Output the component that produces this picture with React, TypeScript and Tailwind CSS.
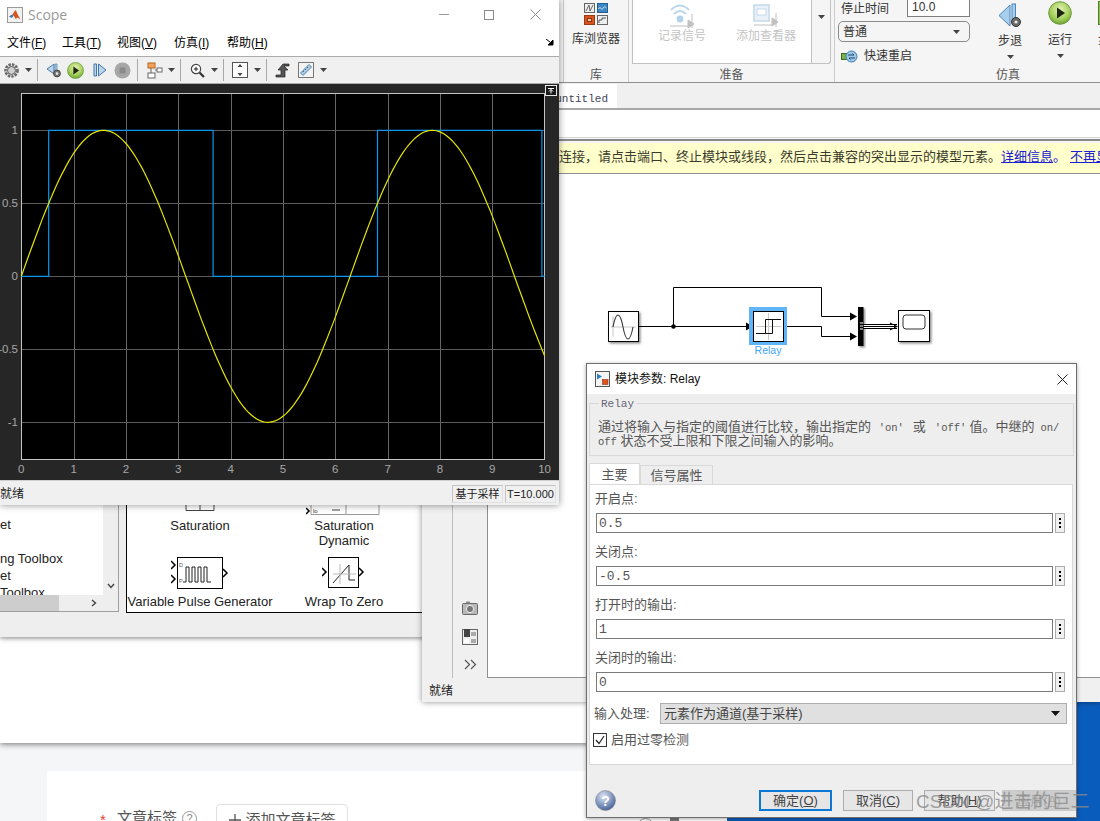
import type { ReactNode } from 'react';

const sansCls = "[font-family:'Liberation_Sans','Noto_Sans_CJK_SC',sans-serif]";
const monoCls = "[font-family:'Liberation_Mono','Noto_Sans_CJK_SC',monospace]";

// plot scale taken from the axes in the scope window
const plotX = (t: number) => 21.3 + t * 52.33;
const plotY = (v: number) => 192.3 - v * 146;

const sinePath = Array.from({ length: 201 }, (_, i) => {
    const t = i / 20;
    return `${i === 0 ? 'M' : 'L'}${plotX(t).toFixed(1)} ${plotY(Math.sin(t)).toFixed(1)}`;
}).join(' ');

const relayPath = [
    [0, 0], [0.5236, 0], [0.5236, 1], [3.665, 1], [3.665, 0], [6.807, 0], [6.807, 1], [9.948, 1], [9.948, 0], [10, 0],
].map(([t, v], i) => `${i === 0 ? 'M' : 'L'}${plotX(t).toFixed(1)} ${plotY(v).toFixed(1)}`).join(' ');

function Caret({ className = '' }: { className?: string }) {
    return (
        <svg width="7" height="4" viewBox="0 0 7 4" className={`shrink-0 ${className}`}>
            <path d="M0 0h7L3.5 4z" fill="#444" />
        </svg>
    );
}

function ToolSep({ className = '' }: { className?: string }) {
    return <div className={`w-px h-[22px] bg-[#a8a8a8] ${className}`} />;
}

function GreenPlay({ size, className = '' }: { size: number; className?: string }) {
    return (
        <svg width={size} height={size} viewBox="0 0 24 24" className={className}>
            <defs>
                <radialGradient id={`play${size}`} cx="50%" cy="35%" r="70%">
                    <stop offset="0%" stopColor="#e4f3b8" />
                    <stop offset="60%" stopColor="#a5d05c" />
                    <stop offset="100%" stopColor="#5f9a2a" />
                </radialGradient>
            </defs>
            <circle cx="12" cy="12" r="11.3" fill={`url(#play${size})`} stroke="#6c9a3c" />
            <path d="M9 6.5 17 12l-8 5.5z" fill="#1d2410" />
        </svg>
    );
}

function MatlabLogo() {
    return (
        <svg width="16" height="16" viewBox="0 0 16 16">
            <rect x="0.5" y="0.5" width="15" height="15" fill="#f2f2f2" stroke="#9a9a9a" />
            <path d="M2 9.5 5.5 7.5 8 3.5c.8-1 1.5 1 2.2 3l3.3 6-3-2-1.8 1.5-2-3.5z" fill="#d9531e" />
            <path d="M2 9.5 5.5 7.5 6.7 9 4.5 11z" fill="#3f7fb5" />
        </svg>
    );
}

function ScopeToolbar() {
    return (
        <div className="h-[26px] bg-[#f0f0f0] border-y border-[#ababab] box-content flex items-center pl-[4px]">
            <svg width="15" height="15" viewBox="0 0 15 15">
                <circle cx="7.5" cy="7.5" r="6" fill="none" stroke="#666" strokeWidth="2.6" strokeDasharray="2.4 1.1" />
                <circle cx="7.5" cy="7.5" r="4" fill="#d0d0d0" stroke="#555" />
            </svg>
            <Caret className="ml-[6px]" />
            <ToolSep className="ml-[5px]" />
            <svg width="16" height="16" viewBox="0 0 16 16" className="ml-[8px]">
                <path d="M8 2 1 7l7 5z" fill="#bcd4ea" stroke="#4a7ba8" />
                <path d="M9 2h2v7H9z" fill="#bcd4ea" stroke="#4a7ba8" strokeWidth=".7" />
                <circle cx="11" cy="11.5" r="3.4" fill="#777" stroke="#444" />
                <circle cx="11" cy="11.5" r="1.2" fill="#eee" />
            </svg>
            <GreenPlay size={17} className="ml-[5px]" />
            <svg width="14" height="14" viewBox="0 0 14 14" className="ml-[9px]">
                <path d="M1 1h2.5v12H1z" fill="#bcd4ea" stroke="#3f78ad" />
                <path d="M5.5 1 13 7l-7.500 6z" fill="#bcd4ea" stroke="#3f78ad" />
            </svg>
            <svg width="17" height="17" viewBox="0 0 17 17" className="ml-[7px]">
                <circle cx="8.500" cy="8.500" r="8" fill="#a6a6a6" />
                <rect x="5.500" y="5.500" width="6" height="6" fill="#8a8a8a" />
            </svg>
            <ToolSep className="ml-[6px]" />
            <svg width="17" height="17" viewBox="0 0 17 17" className="ml-[8px]">
                <rect x="2" y="1" width="7" height="5" fill="#f3a35a" stroke="#b8641c" />
                <rect x="2" y="11" width="7" height="5" fill="#fff" stroke="#666" />
                <rect x="11" y="6" width="5" height="4" fill="#fff" stroke="#666" />
                <path d="M5 6v5M9 8h2" stroke="#666" />
            </svg>
            <Caret className="ml-[5px]" />
            <ToolSep className="ml-[5px]" />
            <svg width="15" height="15" viewBox="0 0 15 15" className="ml-[9px]">
                <circle cx="6" cy="6" r="4.6" fill="#fff" stroke="#444" strokeWidth="1.2" />
                <path d="M3.800 6h4.400M6 3.800v4.400" stroke="#222" />
                <path d="m9.500 9.500 4.500 4.500" stroke="#333" strokeWidth="2.200" />
            </svg>
            <Caret className="ml-[6px]" />
            <ToolSep className="ml-[5px]" />
            <svg width="16" height="16" viewBox="0 0 16 16" className="ml-[8px]">
                <rect x="0.500" y="0.500" width="15" height="15" fill="#fff" stroke="#555" />
                <path d="m8 2 2.500 3h-5zM8 14l2.500-3h-5z" fill="#444" />
            </svg>
            <Caret className="ml-[6px]" />
            <ToolSep className="ml-[5px]" />
            <svg width="15" height="16" viewBox="0 0 15 16" className="ml-[8px]">
                <path d="M1 15v-2h5V8H3l5-6h6v2H9L13 8h-3v7z" fill="#555" stroke="#222" strokeWidth=".7" />
            </svg>
            <svg width="16" height="16" viewBox="0 0 16 16" className="ml-[8px]">
                <rect x="0.500" y="0.500" width="15" height="15" fill="#f4f4f4" stroke="#777" />
                <path d="m2.500 11 8.500-8.500 2.500 2.500L5 13.500z" fill="#a8cbe6" stroke="#5a86a8" />
                <path d="m5 9 1 1M7 7l1 1M9 5l1 1" stroke="#3f6a8a" />
            </svg>
            <Caret className="ml-[6px]" />
        </div>
    );
}

function ScopePlot() {
    const xTicks = [0, 1, 2, 3, 4, 5, 6, 7, 8, 9, 10];
    const yTicks = [
        { v: 1, label: '1' }, { v: 0.5, label: '0.5' }, { v: 0, label: '0' }, { v: -0.5, label: '-0.5' }, { v: -1, label: '-1' },
    ];
    return (
        <svg width="559" height="396" viewBox="0 0 559 396" className="block bg-[#262626]">
            <rect x="21.3" y="9.8" width="523.3" height="365.500" fill="#000" />
            {xTicks.slice(1, 10).map(t => (
                <path key={t} d={`M${Math.round(plotX(t)) + 0.5} 10V375`} stroke="#666" />
            ))}
            {yTicks.map(y => (
                <path key={y.v} d={`M21 ${Math.round(plotY(y.v)) + 0.5}H544.500`} stroke="#5c5c5c" />
            ))}
            <rect x="21.500" y="9.500" width="523" height="366" fill="none" stroke="#c4c4c4" />
            <path d={relayPath} fill="none" stroke="#0a96f0" strokeWidth="1.200" />
            <path d={sinePath} fill="none" stroke="#e4e400" strokeWidth="1.200" />
            <g fontSize="11.500" fill="#a6a6a6" fontFamily="Liberation Sans">
                {yTicks.map(y => (
                    <text key={y.v} x="18" y={plotY(y.v) + 4} textAnchor="end">{y.label}</text>
                ))}
                {xTicks.map(t => (
                    <text key={t} x={plotX(t)} y="389" textAnchor="middle">{t}</text>
                ))}
            </g>
            <rect x="545.500" y="1.500" width="11" height="10" fill="#1a1a1a" stroke="#e8e8e8" />
            <path d="M548 4.500h6M551 5.500v4M549 7.500l2-2 2 2" fill="none" stroke="#fff" />
        </svg>
    );
}

function ScopeWindow() {
    const menus = [
        { t: '文件', k: 'F', w: 'w-[55px]' }, { t: '工具', k: 'T', w: 'w-[55px]' }, { t: '视图', k: 'V', w: 'w-[57px]' },
        { t: '仿真', k: 'I', w: 'w-[53px]' }, { t: '帮助', k: 'H', w: 'w-[50px]' },
    ];
    return (
        <div className={`absolute left-0 top-0 w-[559px] h-[505px] bg-white flex flex-col shadow-[0_0_7px_rgba(0,0,0,0.45)] z-30 ${sansCls}`}>
            <div className="h-[29px] flex items-center pl-[7px]">
                <MatlabLogo />
                <span className="ml-[5px] text-[14px] text-[#9a9a9a] [font-family:'Open_Sans',sans-serif]">Scope</span>
                <div className="ml-auto flex items-center">
                    <div className="w-[10px] h-px bg-[#9a9a9a]" />
                    <div className="w-[10px] h-[10px] border border-[#8a8a8a] ml-[35px]" />
                    <svg width="11" height="11" viewBox="0 0 11 11" className="ml-[36px] mr-[18px]">
                        <path d="m.5.500 10 10m0-10-10 10" stroke="#8a8a8a" />
                    </svg>
                </div>
            </div>
            <div className="h-[27px] flex items-center pl-[7px] text-[12px] text-black">
                {menus.map(m => (
                    <span key={m.k} className={m.w}>{m.t}(<span className="underline">{m.k}</span>)</span>
                ))}
                <svg width="8" height="7" viewBox="0 0 8 7" className="ml-auto mr-[5px]">
                    <path d="m0 0 4 3M7 1v5H2z" stroke="#000" fill="#000" />
                </svg>
            </div>
            <ScopeToolbar />
            <ScopePlot />
            <div className="flex-1 bg-[#f0f0f0] border-t border-[#cfcfcf] flex items-center pt-[2px] text-[12px] text-[#222] pr-[3px]">
                <span>就绪</span>
                <div className="ml-auto w-[51px] h-[18px] border border-[#e0e0e0] border-t-[#c4c4c4] border-l-[#c4c4c4] flex items-center justify-center text-[11px]">基于采样</div>
                <div className="ml-[2px] w-[51px] h-[18px] border border-[#e0e0e0] border-t-[#c4c4c4] border-l-[#c4c4c4] flex items-center justify-center text-[11px]">T=10.000</div>
            </div>
        </div>
    );
}

function RibbonGroup({ label, className, children }: { label: string; className: string; children: ReactNode }) {
    return (
        <div className={`h-full shrink-0 flex flex-col border-r border-[#cdcdcd] ${className}`}>
            <div className="h-[68px] overflow-hidden">{children}</div>
            <div className="text-center text-[12px] leading-[14px] text-[#555]">{label}</div>
        </div>
    );
}

function LibraryIcon() {
    return (
        <svg width="24" height="24" viewBox="0 0 24 24" className="mx-auto">
            <rect x="0.500" y="2.500" width="10" height="9" fill="#eee" stroke="#666" />
            <path d="M2 10 5 4l1 6 3-6" fill="none" stroke="#666" />
            <rect x="13.500" y="2.500" width="10" height="9" fill="#3d88c4" stroke="#245f92" />
            <path d="M14.500 8c2-4 3 2 4 0s2-3 4-1" fill="none" stroke="#cfe6f6" />
            <rect x="0.500" y="14.500" width="10" height="9" fill="#d9531e" stroke="#9c3a12" />
            <rect x="3.500" y="17.500" width="4" height="3" fill="#f3c9a8" stroke="#8a3410" />
            <rect x="13.500" y="14.500" width="10" height="9" fill="#eee" stroke="#666" />
            <path d="M15 22v-3h3v-2h4" fill="none" stroke="#555" />
        </svg>
    );
}

function SignalIcon() {
    return (
        <svg width="26" height="24" viewBox="0 0 26 24" className="mx-auto">
            <path d="M2 6c6-6 12-6 18 0M5 10c4-4 8-4 12 0" fill="none" stroke="#bcd6ea" strokeWidth="1.800" />
            <circle cx="11" cy="15" r="3.400" fill="#b3d2ea" />
            <path d="M1 22h19" stroke="#d4d4d4" strokeWidth="1.500" />
            <path d="M19 16l6 4-6 4z M23 10v14" fill="#c0c0c0" stroke="#c0c0c0" />
        </svg>
    );
}

function ViewerIcon() {
    return (
        <svg width="26" height="24" viewBox="0 0 26 24" className="mx-auto">
            <rect x="1" y="1" width="15" height="16" fill="#eaf2f9" stroke="#c4d8ea" strokeWidth="1.500" />
            <rect x="4" y="5" width="9" height="6" fill="#fff" stroke="#c4d8ea" />
            <path d="M1 21h18" stroke="#d4d4d4" strokeWidth="1.500" />
            <path d="M19 14l6 4-6 4z M23 9v14" fill="#c0c0c0" stroke="#c0c0c0" />
        </svg>
    );
}

function StepBackIcon() {
    return (
        <svg width="24" height="25" viewBox="0 0 24 25">
            <path d="M12 2 1 12.500 12 23z" fill="#a8cfee" stroke="#4a86b8" />
            <rect x="14" y="1" width="3.500" height="18" fill="#a8cfee" stroke="#4a86b8" />
            <circle cx="18" cy="19" r="4.500" fill="#6a6a6a" stroke="#333" />
            <circle cx="18" cy="19" r="1.600" fill="#e8e8e8" />
        </svg>
    );
}

function SimulinkWindow() {
    return (
        <div className={`absolute left-[422px] top-0 w-[678px] h-[702px] bg-[#f0f0f0] flex flex-col shadow-[0_0_6px_rgba(0,0,0,0.45)] z-20 ${sansCls}`}>
            {/* ribbon */}
            <div className="h-[83px] bg-[#f5f5f5] border-b border-[#8f8f8f] flex pl-[141px] overflow-hidden">
                <RibbonGroup label="库" className="w-[66px] border-l border-l-[#cdcdcd]">
                    <div className="pt-[1px]">
                        <LibraryIcon />
                        <div className="mt-[7px] text-center text-[12px] leading-[14px] text-[#333] whitespace-nowrap">库浏览器</div>
                    </div>
                </RibbonGroup>
                <RibbonGroup label="准备" className="w-[206px]">
                    <div className="flex h-[64px] pl-[3px]">
                        <div className="w-[180px] h-[64px] bg-white border-x border-b border-[#c2c2c2] flex text-[12px] leading-[14px] text-[#c4c4c4]">
                            <div className="w-[98px] pt-[4px] text-center">
                                <SignalIcon />
                                <div className="mt-[1px]">记录信号</div>
                            </div>
                            <div className="w-[70px] pt-[4px] text-center">
                                <ViewerIcon />
                                <div className="mt-[1px]">添加查看器</div>
                            </div>
                        </div>
                        <div className="w-[19px] h-[64px] border-r border-b border-[#c2c2c2] rounded-br-[3px] flex items-center justify-center pb-[30px]">
                            <Caret />
                        </div>
                    </div>
                </RibbonGroup>
                <div className="flex-1 h-full flex flex-col">
                    <div className="h-[68px] flex pl-[3px] overflow-hidden">
                        <div className="w-[132px] shrink-0 text-[12px] text-[#333]">
                            <div className="flex items-center h-[17px]">
                                <span className="pl-[3px] w-[69px]">停止时间</span>
                                <div className="w-[63px] h-[17px] bg-white border-x border-b border-[#7e7e7e] pl-[4px] leading-[14px]">10.0</div>
                            </div>
                            <div className="mt-[4px] h-[21px] border border-[#8a8a8a] rounded-[5px] flex items-center justify-between pl-[4px] pr-[9px] bg-[#f5f5f5]">
                                <span>普通</span>
                                <Caret />
                            </div>
                            <div className="mt-[5px] flex items-center">
                                <svg width="17" height="13" viewBox="0 0 17 13" className="ml-[3px]">
                                    <rect x="0.500" y="3.500" width="6" height="6" fill="#7cb24a" stroke="#3f6a1c" />
                                    <circle cx="10.500" cy="6.500" r="5.500" fill="#9ec6e6" stroke="#3b7fb5" />
                                    <path d="M7 5h6l-1.500-1.500M14 8H8l1.500 1.500" fill="none" stroke="#1d4a73" />
                                </svg>
                                <span className="ml-[6px]">快速重启</span>
                            </div>
                        </div>
                        <div className="w-[70px] shrink-0 ml-[5px] flex flex-col items-center text-[12px] text-[#333] pt-[3px]">
                            <StepBackIcon />
                            <div className="mt-[6px] leading-[14px]">步退</div>
                            <Caret className="mt-[7px]" />
                        </div>
                        <div className="w-[30px] shrink-0 flex flex-col items-center text-[12px] text-[#333] pt-[1px]">
                            <GreenPlay size={24} />
                            <div className="mt-[8px] leading-[14px]">运行</div>
                            <Caret className="mt-[7px]" />
                        </div>
                        <div className="ml-[23px] text-[12px] text-[#333] pt-[1px] whitespace-nowrap flex flex-col">
                            <div className="w-[12px] h-[24px] bg-[#8cc152] border border-[#4e7f2a]" />
                            <div className="mt-[8px] leading-[14px]">步进</div>
                        </div>
                    </div>
                    <div className="text-[12px] leading-[14px] text-[#555] pl-[161px]">仿真</div>
                </div>
            </div>
            {/* tab strip */}
            <div className="h-[27px] bg-[#f0f0f0] border-b-2 border-[#a8a8a8] flex items-end pl-[134px]">
                <div className={`w-[61px] h-[24px] bg-white flex items-center justify-end pr-[9px] pt-[6px] text-[11px] text-[#445] ${monoCls}`}>untitled</div>
            </div>
            <div className="h-[28px] bg-white border-b border-[#d8d8d8]" />
            <div className="h-[3px] bg-[#f4f4f4] border-b-2 border-[#8a8a8a]" />
            <div className="h-[2px] bg-[#f4f4f4]" />
            {/* yellow hint */}
            <div className="h-[31px] bg-[#ffffcc] border-b border-[#8f8f8f] flex items-center pl-[137px] pb-[3px] text-[13px] text-[#3a3a2a] whitespace-nowrap overflow-hidden">
                <span>连接，请点击端口、终止模块或线段，然后点击兼容的突出显示的模型元素。</span>
                <span className="text-[#2020d0] underline">详细信息</span>
                <span className="text-[#2020d0]">。</span>
                <span className="ml-[4px] text-[#2020d0] underline">不再显示</span>
            </div>
            {/* canvas and side palette */}
            <div className="flex-1 flex min-h-0">
                <div className="w-[65px] flex flex-col">
                    <div className="flex-1 w-[31px] border-r border-[#bdbdbd]" />
                    <div className="h-[24px] flex items-center pl-[7px] pt-[2px] text-[12px] text-[#222]">就绪</div>
                </div>
                <div className="flex-1 bg-white border-l border-b border-[#8f8f8f] mb-[24px]" />
            </div>
            {/* side palette icons sit on top of the separator */}
            <div className="absolute left-[40px] top-[601px] w-[16px] flex flex-col items-center gap-[14px]">
                <svg width="16" height="14" viewBox="0 0 16 14">
                    <rect x="0.500" y="2.500" width="15" height="11" rx="1" fill="#b8b8b8" stroke="#666" />
                    <rect x="4" y="0.500" width="4" height="2" fill="#888" />
                    <circle cx="8" cy="8" r="3.600" fill="#777" stroke="#eee" />
                </svg>
                <svg width="16" height="16" viewBox="0 0 16 16">
                    <rect x="0.500" y="0.500" width="15" height="15" fill="#eee" stroke="#666" />
                    <rect x="2" y="0" width="6" height="8" fill="#444" />
                    <rect x="9" y="3" width="5" height="4" fill="#aaa" />
                    <rect x="2" y="10" width="5" height="4" fill="#fff" />
                    <rect x="9" y="10" width="5" height="4" fill="#aaa" />
                </svg>
                <svg width="13" height="11" viewBox="0 0 13 11">
                    <path d="m1 1 4.500 4.500L1 10M7 1l4.500 4.500L7 10" fill="none" stroke="#555" strokeWidth="1.200" />
                </svg>
            </div>
        </div>
    );
}

function ModelDiagram() {
    return (
        <svg width="330" height="80" viewBox="0 0 330 80" className="absolute left-[605px] top-[280px] z-20">
            <defs>
                <filter id="blockShadow" x="-20%" y="-20%" width="150%" height="150%">
                    <feDropShadow dx="1.500" dy="1.500" stdDeviation="1" floodColor="#000" floodOpacity=".45" />
                </filter>
            </defs>
            <g fill="none" stroke="#000" strokeWidth="1">
                <path d="M33 46.500H144M68.500 46.500V7.500H216.500V36.500H245" />
                <path d="M179 46.500H216.500V56.500H245" />
            </g>
            <circle cx="68.500" cy="46.500" r="2.300" fill="#000" />
            <path d="M148 46.500l-7-4v8zM252 36.500l-7-4v8zM252 56.500l-7-4v8z" fill="#000" />
            {/* sine wave block */}
            <rect x="3.500" y="31.500" width="30" height="30" fill="#fff" stroke="#000" filter="url(#blockShadow)" />
            <path d="M8 36v21M6 47h25" stroke="#c8c8c8" />
            <path d="M8 47c3-16 7-16 10 0s7 16 10 0" fill="none" stroke="#333" strokeWidth="1.100" />
            {/* relay block with selection */}
            <rect x="144" y="27" width="38" height="38" fill="#5fb5f8" />
            <rect x="148.500" y="31.500" width="30" height="30" fill="#fff" stroke="#000" />
            <path d="M163.500 33v27M151 46.500h25" stroke="#c8c8c8" />
            <path d="M151 53.500H167.500V39.500M160.500 53.500V39.500H176" fill="none" stroke="#111" />
            <text x="163" y="74" fontSize="10.500" fill="#3da5f7" textAnchor="middle" fontFamily="Liberation Sans">Relay</text>
            {/* mux */}
            <rect x="253" y="27" width="5.500" height="39" fill="#000" filter="url(#blockShadow)" />
            <path d="M255 43h3M255 46h3M255 49h3" stroke="#fff" />
            {/* bus */}
            <path d="M258 44.500h34M258 46.500h34M258 48.500h34" stroke="#000" />
            <path d="M293 46.500l-8-4v8z" fill="#000" />
            <path d="M259 45.500h30M259 47.500h30" stroke="#fff" />
            {/* scope block */}
            <rect x="293.500" y="30.500" width="31" height="31" fill="#fff" stroke="#000" filter="url(#blockShadow)" />
            <rect x="298" y="35" width="22" height="14" rx="3" fill="#fff" stroke="#333" />
        </svg>
    );
}

function LibraryWindow() {
    return (
        <div className={`absolute left-0 top-[505px] w-[430px] h-[132px] bg-[#eeeeee] shadow-[0_1px_5px_rgba(0,0,0,0.5)] z-10 flex text-[13px] leading-[15px] text-[#222] ${sansCls}`}>
            <div className="w-[119px] h-[107px] border-r border-b border-[#9f9f9f] flex flex-col">
                <div className="flex-1 flex min-h-0">
                    <div className="w-[103px] bg-white overflow-hidden pt-[11px] text-[13px] leading-[17px] whitespace-nowrap">
                        <div>et</div>
                        <div className="h-[17px]" />
                        <div>ng Toolbox</div>
                        <div>et</div>
                        <div>Toolbox</div>
                    </div>
                    <div className="flex-1 flex items-end justify-center pb-[6px]">
                        <svg width="8" height="6" viewBox="0 0 8 6"><path d="m1 1 3 3.500L7 1" fill="none" stroke="#444" strokeWidth="1.400" /></svg>
                    </div>
                </div>
                <div className="h-[16px] shrink-0 flex items-center">
                    <div className="w-[59px] h-full bg-[#cdcdcd]" />
                    <svg width="6" height="8" viewBox="0 0 6 8" className="ml-[32px]"><path d="m1 1 3.500 3L1 7" fill="none" stroke="#444" strokeWidth="1.400" /></svg>
                </div>
            </div>
            <div className="ml-[7px] flex-1 h-[108px] bg-white border-l border-b border-black grid grid-cols-[144px_144px] grid-rows-[52px_56px] pl-[1px]">
                <div className="flex flex-col items-center">
                    <svg width="30" height="6" viewBox="0 0 30 6"><path d="M1 0v5.500h28V0M15 0v5" fill="none" stroke="#444" /></svg>
                    <div className="mt-[7px]">Saturation</div>
                </div>
                <div className="flex flex-col items-center">
                    <svg width="74" height="10" viewBox="0 0 74 10" className="ml-[-2px]">
                        <path d="M5 0v9.500h68V0M40 0v9" fill="none" stroke="#999" />
                        <path d="M0 3l3 3-3 3" fill="none" stroke="#000" strokeWidth="1.500" />
                        <path d="M26 5h8" stroke="#444" />
                        <text x="7" y="8" fontSize="6" fill="#333" fontFamily="Liberation Sans">lo</text>
                    </svg>
                    <div className="mt-[3px] text-center">Saturation<br />Dynamic</div>
                </div>
                <div className="flex flex-col items-center">
                    <svg width="58" height="32" viewBox="0 0 58 32">
                        <rect x="6.500" y="0.500" width="45" height="31" fill="#fff" stroke="#000" />
                        <path d="M0 4l4 4-4 4M0 18l4 4-4 4M52 12l4 4-4 4" fill="none" stroke="#000" strokeWidth="1.500" />
                        <path d="M12 25h3V10h3v15h3V10h3v15h3V10h3v15h3V10h3v15h4" fill="none" stroke="#222" />
                        <text x="8" y="10" fontSize="5.500" fill="#555" fontFamily="Liberation Sans">D</text>
                        <text x="8" y="26" fontSize="5.500" fill="#555" fontFamily="Liberation Sans">P</text>
                    </svg>
                    <div className="mt-[5px] whitespace-nowrap">Variable Pulse Generator</div>
                </div>
                <div className="flex flex-col items-center">
                    <svg width="44" height="32" viewBox="0 0 44 32">
                        <rect x="6.500" y="0.500" width="30" height="30" fill="#fff" stroke="#000" />
                        <path d="M0 11l4 4-4 4M37 11l4 4-4 4" fill="none" stroke="#000" strokeWidth="1.500" />
                        <path d="M11 26 27 8M27 8v15h6" fill="none" stroke="#222" />
                        <path d="M11 17h23M18 7v20" stroke="#bbb" />
                    </svg>
                    <div className="mt-[5px]">Wrap To Zero</div>
                </div>
            </div>
        </div>
    );
}

function ParamField({ label, value }: { label: string; value: string }) {
    return (
        <div className="h-[53px]">
            <div className="h-[28px] leading-[28px] pl-[5px] text-[13px] text-[#555]">{label}</div>
            <div className="flex items-center pl-[6px]">
                <div className={`w-[457px] h-[20px] border border-[#7a7a7a] bg-white pl-[2px] text-[13px] leading-[20px] text-[#555] ${monoCls}`}>{value}</div>
                <div className="ml-[2px] w-[10px] h-[20px] border border-[#adadad] bg-[#f0f0f0] flex flex-col items-center justify-center gap-[2px]">
                    <div className="w-[2px] h-[2px] bg-black" />
                    <div className="w-[2px] h-[2px] bg-black" />
                    <div className="w-[2px] h-[2px] bg-black" />
                </div>
            </div>
        </div>
    );
}

function DialogButton({ label, k, className }: { label: string; k: string; className: string }) {
    return (
        <div className={`h-[21px] border flex items-center justify-center text-[13px] ${className}`}>
            {label}(<span className="underline">{k}</span>)
        </div>
    );
}

function RelayDialog() {
    const monoSmall = `${monoCls} text-[10.5px]`;
    return (
        <div className={`absolute left-[586px] top-[363px] w-[491px] h-[455px] bg-[#eeeeee] border border-[#6f6f6f] flex flex-col shadow-[0_1px_4px_rgba(0,0,0,0.35)] z-40 ${sansCls}`}>
            <div className="h-[30px] bg-white flex items-center pl-[8px] shrink-0">
                <svg width="15" height="16" viewBox="0 0 15 16">
                    <rect x="0.500" y="0.500" width="14" height="15" fill="#f4f4f4" stroke="#555" />
                    <path d="M2 2.500 7 5.500 2 8.500z" fill="#2f7fc0" />
                    <rect x="7.500" y="8.500" width="5.500" height="5" fill="#e0541c" stroke="#8a3410" strokeWidth=".6" />
                </svg>
                <span className="ml-[5px] text-[12px] text-[#111]">模块参数: Relay</span>
                <svg width="11" height="11" viewBox="0 0 11 11" className="ml-auto mr-[8px]">
                    <path d="m.5.500 10 10m0-10-10 10" stroke="#222" />
                </svg>
            </div>
            {/* description group */}
            <div className="relative mt-[9px] mx-[2px] h-[53px] border border-[#d9d9d9] pl-[8px] pt-[16px] text-[13px] text-[#555] whitespace-nowrap">
                <span className={`absolute left-[9px] top-[-7px] px-[2px] bg-[#eeeeee] text-[11px] leading-[14px] text-[#667] ${monoCls}`}>Relay</span>
                <div className="h-[14px] leading-[14px]">
                    通过将输入与指定的阈值进行比较，输出指定的 <span className={`${monoSmall} ml-[4px]`}>'on'</span>
                    <span className="ml-[9px]">或</span>
                    <span className={`${monoSmall} ml-[9px]`}>'off'</span>
                    <span className="ml-[3px]">值。中继的</span>
                    <span className={`${monoSmall} ml-[6px]`}>on/</span>
                </div>
                <div className="h-[14px] leading-[14px]"><span className={monoSmall}>off</span> 状态不受上限和下限之间输入的影响。</div>
            </div>
            {/* tabs */}
            <div className="mt-[7px] ml-[2px] flex items-end text-[13px] text-[#555] h-[21px] shrink-0">
                <div className="w-[51px] h-[21px] bg-white border border-b-0 border-[#d9d9d9] flex items-center justify-center pt-[2px]">主要</div>
                <div className="w-[73px] h-[19px] border border-b-0 border-[#d9d9d9] flex items-center justify-center pt-[2px]">信号属性</div>
            </div>
            <div className="mx-[2px] w-[484px] h-[281px] shrink-0 bg-white border border-[#d9d9d9]">
                <ParamField label="开启点:" value="0.5" />
                <ParamField label="关闭点:" value="-0.5" />
                <ParamField label="打开时的输出:" value="1" />
                <ParamField label="关闭时的输出:" value="0" />
                <div className="mt-[6px] flex items-center h-[21px] pl-[4px] text-[13px] text-[#555]">
                    <span className="w-[66px]">输入处理:</span>
                    <div className="w-[407px] h-[21px] bg-[#e0e0e0] border border-[#adadad] flex items-center justify-between pl-[3px] pr-[6px] text-[#444]">
                        <span>元素作为通道(基于采样)</span>
                        <svg width="9" height="5" viewBox="0 0 9 5"><path d="M0 0h9L4.500 5z" fill="#111" /></svg>
                    </div>
                </div>
                <div className="mt-[9px] flex items-center h-[14px] pl-[3px] text-[13px] leading-[14px] text-[#555]">
                    <div className="w-[14px] h-[14px] border border-[#333] bg-white flex items-center justify-center">
                        <svg width="10" height="10" viewBox="0 0 10 10"><path d="m1 5 3 3.500L9 1" fill="none" stroke="#222" strokeWidth="1.200" /></svg>
                    </div>
                    <span className="ml-[4px]">启用过零检测</span>
                </div>
            </div>
            {/* button row */}
            <div className="flex-1 flex items-start pt-[25px] pl-[8px]">
                <svg width="21" height="21" viewBox="0 0 21 21">
                    <defs>
                        <radialGradient id="helpBall" cx="40%" cy="30%" r="75%">
                            <stop offset="0%" stopColor="#dfe6f2" />
                            <stop offset="60%" stopColor="#7d94bf" />
                            <stop offset="100%" stopColor="#3f5a8f" />
                        </radialGradient>
                    </defs>
                    <circle cx="10.500" cy="10.500" r="10" fill="url(#helpBall)" stroke="#8a8a8a" strokeWidth=".6" />
                    <text x="10.500" y="15.500" textAnchor="middle" fontSize="14" fontWeight="bold" fill="#fff" fontFamily="Liberation Sans">?</text>
                </svg>
                <DialogButton label="确定" k="O" className="ml-[143px] w-[73px] border-2 border-[#0a78d4] bg-[#e6e6e6] text-[#444]" />
                <DialogButton label="取消" k="C" className="ml-[11px] w-[70px] border-[#adadad] bg-[#e6e6e6] text-[#444]" />
                <DialogButton label="帮助" k="H" className="ml-[11px] w-[71px] border-[#adadad] bg-[#e6e6e6] text-[#444]" />
                <DialogButton label="应用" k="A" className="ml-[7px] w-[74px] border-[#c8c8c8] bg-[#cccccc] text-[#aaa]" />
            </div>
        </div>
    );
}

function BlogPage() {
    return (
        <>
            <div className="absolute left-0 top-0 w-[727px] h-[743px] bg-white shadow-[0_1px_6px_rgba(0,0,0,0.55)] z-[1]" />
            <div className={`absolute left-0 top-[743px] w-[727px] h-[78px] bg-[#f5f6f7] pl-[47px] pt-[28px] ${sansCls}`}>
                <div className="h-[60px] bg-white rounded-tl-[4px] flex pl-[53px] pt-[33px] text-[15px] text-[#555]">
                    <span className="text-[#e33e33] mt-[5px] w-[17px]">*</span>
                    <span className="mt-[3px] leading-[22px]">文章标签</span>
                    <span className="ml-[5px] mt-[7px] w-[15px] h-[15px] rounded-full border border-[#999] text-[11px] leading-[13px] text-center text-[#888]">?</span>
                    <div className="ml-[19px] w-[132px] h-[32px] border border-[#e0e0e6] rounded-[4px] flex items-center justify-center text-[#555]">
                        <svg width="12" height="12" viewBox="0 0 12 12" className="mr-[5px]"><path d="M6 0v12M0 6h12" stroke="#555" strokeWidth="1.300" /></svg>
                        添加文章标签
                    </div>
                    {/* tops of the controls further along the row, only a sliver shows under the dialog */}
                    <div className="ml-[289px] mt-[14px] w-[17px] h-[17px] rounded-full border border-[#999]" />
                    <div className="ml-[16px] mt-[14px] w-[9px] h-[10px] bg-[#777]" />
                </div>
            </div>
        </>
    );
}

export default function App() {
    return (
        <div className="relative w-[1100px] h-[821px] overflow-hidden bg-[#0a5cbc]">
            <BlogPage />
            <LibraryWindow />
            <SimulinkWindow />
            <ModelDiagram />
            <ScopeWindow />
            <RelayDialog />
            {/* watermark */}
            <div className={`absolute left-[916px] top-[788px] z-50 text-[19px] leading-[28px] text-[#8a8a8a]/80 whitespace-nowrap ${sansCls}`}>CSDN @进击的巨二</div>
        </div>
    );
}
